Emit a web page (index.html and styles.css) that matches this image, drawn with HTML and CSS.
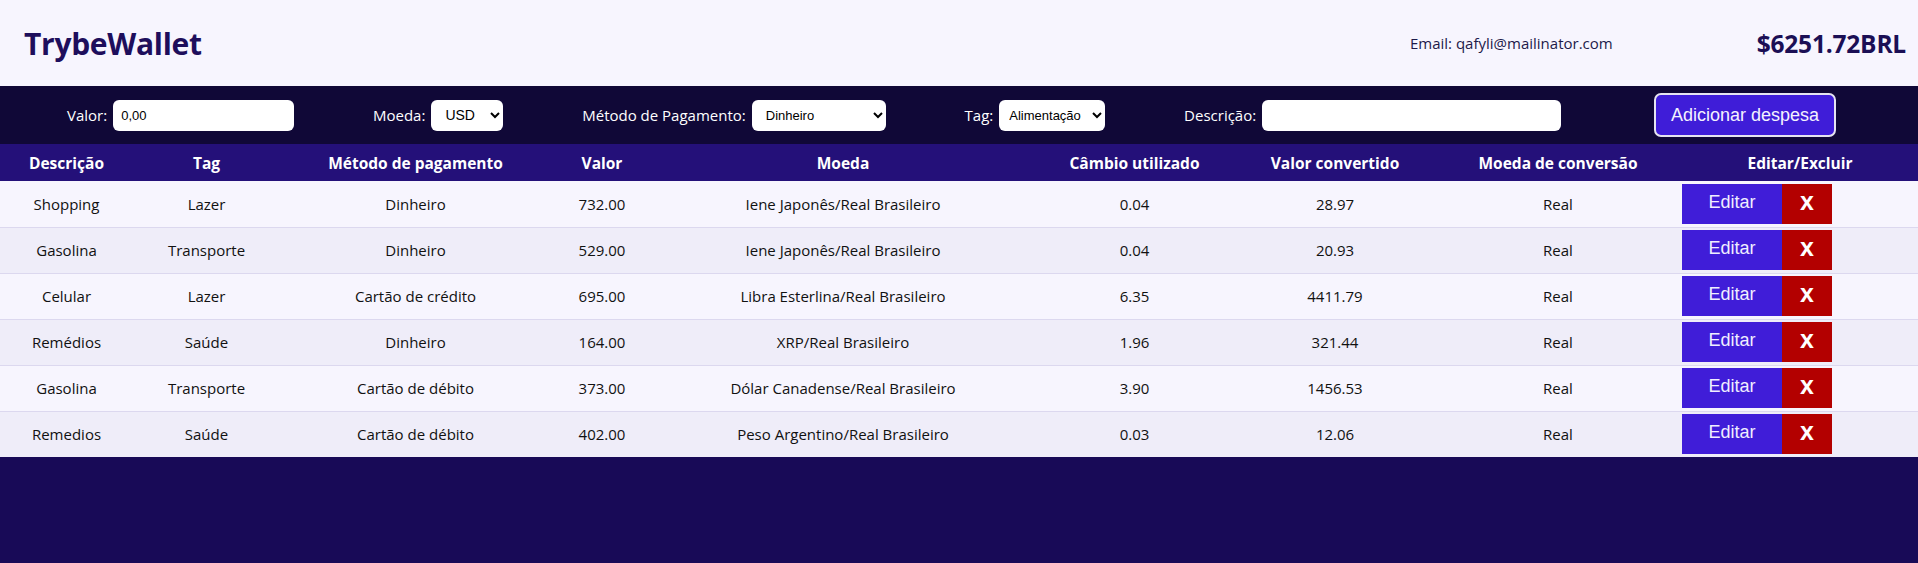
FILE: index.html
```html
<!DOCTYPE html>
<html lang="pt-BR">
<head>
<meta charset="utf-8">
<title>TrybeWallet</title>
<link rel="stylesheet" href="styles.css">
</head>
<body>
<header class="top">
  <h1 class="brand">TrybeWallet</h1>
  <div class="spacer"></div>
  <p class="email">Email: qafyli@mailinator.com</p>
  <p class="total">$6251.72BRL</p>
</header>
<form class="form">
  <label class="field">Valor: <input class="inp inp-valor" type="text" value="0,00"></label>
  <label class="field">Moeda: <select class="sel sel-moeda"><option>USD</option></select></label>
  <label class="field">Método de Pagamento: <select class="sel sel-metodo"><option>Dinheiro</option></select></label>
  <label class="field">Tag: <select class="sel sel-tag"><option>Alimentação</option></select></label>
  <label class="field">Descrição: <input class="inp inp-desc" type="text"></label>
  <button class="add" type="button">Adicionar despesa</button>
</form>
<table class="grid">
  <colgroup>
    <col class="c1"><col class="c2"><col class="c3"><col class="c4"><col class="c5"><col class="c6"><col class="c7"><col class="c8"><col class="c9">
  </colgroup>
  <thead>
    <tr>
      <th>Descrição</th><th>Tag</th><th>Método de pagamento</th><th>Valor</th><th>Moeda</th><th>Câmbio utilizado</th><th>Valor convertido</th><th>Moeda de conversão</th><th>Editar/Excluir</th>
    </tr>
  </thead>
  <tbody>
    <tr><td>Shopping</td><td>Lazer</td><td>Dinheiro</td><td>732.00</td><td>Iene Japonês/Real Brasileiro</td><td>0.04</td><td>28.97</td><td>Real</td><td class="acts"><button class="edit" type="button">Editar</button><button class="del" type="button">x</button></td></tr>
    <tr><td>Gasolina</td><td>Transporte</td><td>Dinheiro</td><td>529.00</td><td>Iene Japonês/Real Brasileiro</td><td>0.04</td><td>20.93</td><td>Real</td><td class="acts"><button class="edit" type="button">Editar</button><button class="del" type="button">x</button></td></tr>
    <tr><td>Celular</td><td>Lazer</td><td>Cartão de crédito</td><td>695.00</td><td>Libra Esterlina/Real Brasileiro</td><td>6.35</td><td>4411.79</td><td>Real</td><td class="acts"><button class="edit" type="button">Editar</button><button class="del" type="button">x</button></td></tr>
    <tr><td>Remédios</td><td>Saúde</td><td>Dinheiro</td><td>164.00</td><td>XRP/Real Brasileiro</td><td>1.96</td><td>321.44</td><td>Real</td><td class="acts"><button class="edit" type="button">Editar</button><button class="del" type="button">x</button></td></tr>
    <tr><td>Gasolina</td><td>Transporte</td><td>Cartão de débito</td><td>373.00</td><td>Dólar Canadense/Real Brasileiro</td><td>3.90</td><td>1456.53</td><td>Real</td><td class="acts"><button class="edit" type="button">Editar</button><button class="del" type="button">x</button></td></tr>
    <tr><td>Remedios</td><td>Saúde</td><td>Cartão de débito</td><td>402.00</td><td>Peso Argentino/Real Brasileiro</td><td>0.03</td><td>12.06</td><td>Real</td><td class="acts"><button class="edit" type="button">Editar</button><button class="del" type="button">x</button></td></tr>
  </tbody>
</table>
</body>
</html>
```
FILE: styles.css
```css
* { box-sizing: border-box; }
html, body { margin: 0; padding: 0; }
body {
  background: #180a57;
  font-family: "Open Sans", "Noto Sans", sans-serif;
  color: #111;
}
.top {
  height: 86px;
  background: #f7f5fe;
  display: flex;
  align-items: center;
  padding: 0 12px 0 24px;
}
.brand {
  margin: 0;
  font-size: 30px;
  font-weight: 700;
  color: #1e0e5c;
  letter-spacing: -0.3px;
}
.spacer { flex: 1; }
.email {
  margin: 0 144px 0 0;
  font-size: 15px;
  color: #1d1a4a;
}
.total {
  margin: 0;
  font-size: 24.5px;
  font-weight: 700;
  color: #1b0f55;
  letter-spacing: -0.2px;
}
.form {
  height: 58px;
  margin: 0;
  background: #100837;
  display: flex;
  align-items: center;
  justify-content: space-between;
  padding: 0 82px 0 67px;
}
.field {
  display: flex;
  align-items: center;
  gap: 6px;
  color: #ffffff;
  font-size: 15px;
}
.inp, .sel {
  height: 31px;
  border: none;
  border-radius: 6px;
  background: #ffffff;
  font-family: Arial, "Liberation Sans", sans-serif;
  font-size: 13px;
  color: #000;
}
.inp { padding: 0 8px; }
.sel { padding: 0 4px 0 10px; }
.inp-valor { width: 181px; }
.inp-desc { width: 299px; }
.sel-moeda { width: 72px; font-size: 14px; }
.sel-metodo { width: 134px; }
.sel-tag { width: 106px; padding-left: 6px; }
.add {
  width: 182px;
  height: 44px;
  background: #3f1dd8;
  color: #f4f2ff;
  border: 2px solid #e6e4f0;
  border-radius: 7px;
  font-family: Arial, "Liberation Sans", sans-serif;
  font-size: 18px;
  margin-left: 14px;
}
.grid {
  width: 100%;
  border-collapse: collapse;
  table-layout: fixed;
}
.c1 { width: 133px; }
.c2 { width: 147px; }
.c3 { width: 271px; }
.c4 { width: 102px; }
.c5 { width: 380px; }
.c6 { width: 203px; }
.c7 { width: 198px; }
.c8 { width: 248px; }
.c9 { width: 236px; }
.grid th {
  height: 37px;
  background: #241079;
  color: #ffffff;
  font-size: 15.5px;
  font-weight: 700;
  text-align: center;
  padding: 0;
  white-space: nowrap;
}
.grid td {
  height: 46px;
  padding: 0;
  font-size: 15px;
  text-align: center;
  color: #111;
  border-bottom: 1px solid #dcd8ef;
  white-space: nowrap;
}
.grid tbody tr:nth-child(odd) td { background: #f7f5fe; }
.grid tbody tr:nth-child(even) td { background: #efedf9; }
.grid tbody tr:last-child td { border-bottom: none; }
.grid td.acts {
  text-align: left;
  padding-left: 0;
}
.edit, .del {
  height: 40px;
  border: none;
  vertical-align: middle;
  font-family: Arial, "Liberation Sans", sans-serif;
  padding: 0 0 3px 0;
  margin: 0;
}
.edit {
  width: 100px;
  background: #401dd8;
  color: #f0eeff;
  font-size: 18px;
}
.del {
  width: 50px;
  background: #b30000;
  color: #ffffff;
  font-size: 25px;
  font-weight: 700;
  padding-bottom: 5px;
}
```
